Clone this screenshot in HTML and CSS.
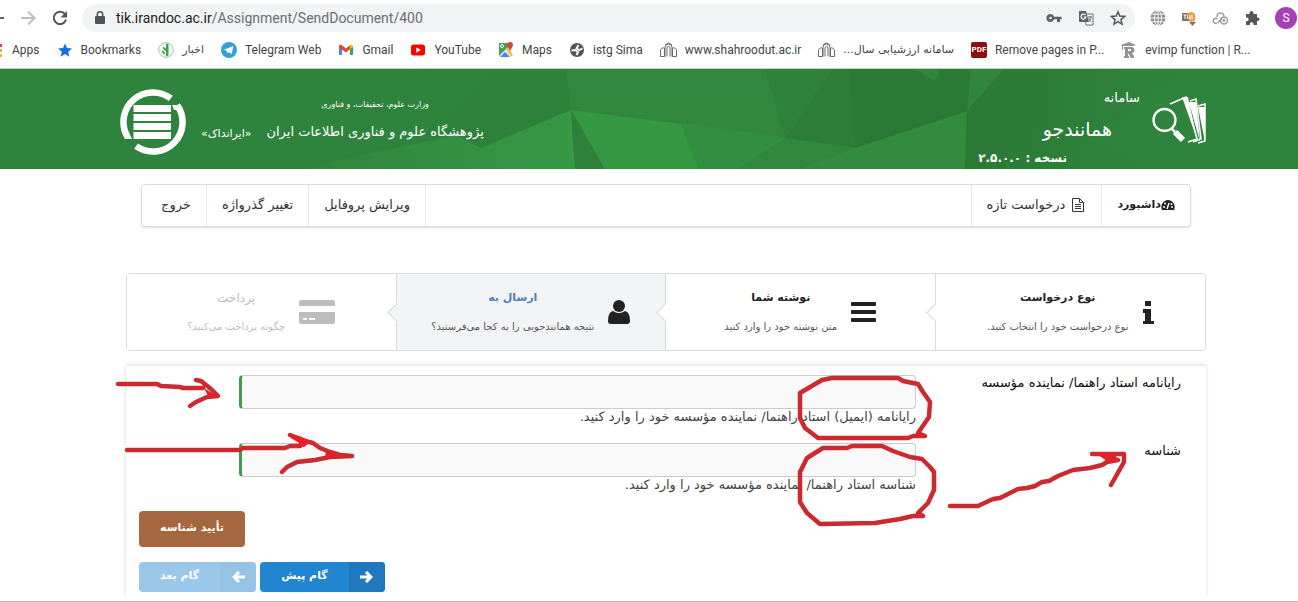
FILE: index.html
```html
<!DOCTYPE html>
<html lang="fa">
<head>
<meta charset="utf-8">
<title>سامانه همانندجو</title>
<link rel="stylesheet" href="styles.css">
</head>
<body>
<div class="page">
<header class="browser">
  <div class="toolbar">
    <button class="tool back" aria-label="Back"><svg width="10" height="16" viewBox="0 0 10 16"><path d="M0 8h4" stroke="#5f6368" stroke-width="2"/></svg></button>
    <button class="tool" aria-label="Forward"><svg width="16" height="16" viewBox="0 0 16 16" fill="none" stroke="#bcbec0" stroke-width="2"><path d="M1 8h13M8 1.500l6.500 6.500L8 14.500"/></svg></button>
    <button class="tool reload" aria-label="Reload"><svg width="16" height="16" viewBox="0 0 16 16"><path d="M13 4.200A6.200 6.200 0 1 0 14 9.500" fill="none" stroke="#505458" stroke-width="2"/><path d="M15 1v6.500H8.500z" fill="#505458"/></svg></button>
    <div class="address">
      <svg width="10" height="14" viewBox="0 0 10 14"><rect y="5" width="10" height="8" rx="1" fill="#505458"/><path d="M2.300 5V3.500a2.700 2.700 0 0 1 5.400 0V5" fill="none" stroke="#505458" stroke-width="1.500"/></svg>
      <p class="url"><span class="host">tik.irandoc.ac.ir</span>/Assignment/SendDocument/400</p>
      <div class="address-tools">
        <svg width="16" height="16" viewBox="0 0 16 16" fill="#5f6368"><path fill-rule="evenodd" d="M4.500 4a4 4 0 1 0 3.700 5.300H11V12h3V9.300h1.500V6.700H8.200A4 4 0 0 0 4.500 4zm0 2.700a1.300 1.300 0 1 1 0 2.600 1.300 1.300 0 0 1 0-2.600z"/></svg>
        <svg width="16" height="16" viewBox="0 0 16 16"><path d="M7 4h8v11H8z" fill="#fff" stroke="#6b6e72"/><path d="M1 1h7l3 11H2a1 1 0 0 1-1-1z" fill="#5f6368"/><path d="M7.500 5A2.500 2.500 0 1 0 8 7H5.800" fill="none" stroke="#fff" stroke-width="1.200"/><path d="M10 7h4M12 6v1M10.500 12q2.500-2 2.800-5M10.500 8q1 3 3 4" fill="none" stroke="#6b6e72"/></svg>
        <svg width="16" height="16" viewBox="0 0 16 16"><path d="M8 1.800l1.800 4.300 4.700.4-3.500 3.100 1 4.500L8 11.700l-4 2.400 1-4.500L1.500 6.500l4.700-.4z" fill="none" stroke="#54585c" stroke-width="1.500"/></svg>
      </div>
    </div>
    <div class="extensions">
      <svg width="16" height="16" viewBox="0 0 16 16" fill="none" stroke="#fff" stroke-width=".9"><circle cx="8" cy="8" r="7.500" fill="#8b8d90" stroke="none"/><ellipse cx="8" cy="8" rx="3.500" ry="7.500"/><path d="M8 0v16M0 8h16M1.500 4.200h13M1.500 11.800h13"/></svg>
      <svg width="16" height="16" viewBox="0 0 16 16"><rect x="1" y="3" width="9" height="8" rx="1" fill="#77736d"/><path d="M2.500 5h3M4 5v4M6.500 5v4" stroke="#fff"/><path d="M6 3l5-1 3 2v7l-4 1-3-3z" fill="#e8984e"/><path d="M8 5l4-.5v5H8z" fill="#ffd38c"/><path d="M8 12h7l-3.500 4z" fill="#777"/></svg>
      <svg width="17" height="16" viewBox="0 0 17 16" fill="none" stroke="#96989b" stroke-width="1.400"><path d="M5 7a3.500 3.500 0 0 1 7-1"/><path d="M5.500 9A2.500 2.500 0 1 0 5 13"/><path d="M6 13l4-5"/><circle cx="12" cy="10.500" r="3.500"/><circle cx="12" cy="10.500" r=".7" fill="#777"/></svg>
      <svg width="16" height="16" viewBox="0 0 16 16" fill="#54585c"><path d="M2 4h3.500V3a2 2 0 0 1 4 0v1H13v3.500h.7a1.800 1.800 0 0 1 0 3.600H13V15H9.500v-1a1.800 1.800 0 0 0-3.600 0v1H2v-3.800h.8a1.800 1.800 0 0 0 0-3.600H2z"/></svg>
      <span class="avatar">S</span>
    </div>
  </div>
  <nav class="bookmarks" aria-label="Bookmarks">
    <a href="#"><svg width="4" height="16" viewBox="0 0 4 16"><path d="M0 2h2v3H0z" fill="#d64545"/><path d="M0 7h2v3H0z" fill="#d9a54b"/><path d="M0 12h2v3H0z" fill="#e8bd28"/></svg>Apps</a>
    <a href="#"><svg width="16" height="16" viewBox="0 0 16 16"><path d="M8 1.500l2 4.600 5 .4-3.800 3.300 1.200 4.900L8 12.100l-4.400 2.600 1.200-4.900L1 6.500l5-.4z" fill="#1a6ddd"/></svg>Bookmarks</a>
    <a href="#"><svg width="16" height="16" viewBox="0 0 16 16"><circle cx="8" cy="8" r="7.300" fill="#fff" stroke="#7fbf86" stroke-width=".8"/><path d="M8 2l2.500-.5v12L8 14.500z" fill="#3da34b"/><path d="M3.500 8.500q3 0 4 4-3 0-4-4zM5 5q3 0 3.500 4Q5 9 5 5z" fill="#3da34b"/></svg><span lang="fa" dir="rtl">اخبار</span></a>
    <a href="#"><svg width="16" height="16" viewBox="0 0 16 16"><circle cx="8" cy="8" r="8" fill="#33a0d8"/><path d="M2.800 7.800l9.500-3.900-1.600 8.300-3-2.200-1.500 1.500-.4-2.700z" fill="#fff"/></svg>Telegram Web</a>
    <a href="#"><svg width="16" height="16" viewBox="0 0 16 16"><path d="M1 4h3v9H2a1 1 0 0 1-1-1z" fill="#4285f4"/><path d="M12 4h3v8a1 1 0 0 1-1 1h-2z" fill="#34a853"/><path d="M1 3.500Q2.500 2 4 3.300l4 3.200 4-3.200v4L8 10.500 1 5.500z" fill="#ea4335"/><path d="M12 3.300Q14 2 15 3.800V5l-3 2.300z" fill="#fbbc04"/></svg>Gmail</a>
    <a href="#"><svg width="16" height="16" viewBox="0 0 16 16"><rect x="1" y="2.500" width="14" height="11" rx="2.500" fill="#f00"/><path d="M6.300 5.300v5.400L11 8z" fill="#fff"/></svg>YouTube</a>
    <a href="#"><svg width="16" height="16" viewBox="0 0 16 16"><path d="M1 1h13v13H1z" fill="#40a35a"/><path d="M1 14L12 3l2 3v8z" fill="#e9e9e5"/><path d="M2 15l5-5 5 5z" fill="#4285f4"/><path d="M9 6l5 8" stroke="#f1bd2c" stroke-width="2"/><path d="M12 0a3 3 0 0 1 3 3c0 2-2 3-3 6-1-3-3-4-3-6a3 3 0 0 1 3-3z" fill="#d8463a"/><circle cx="4" cy="4" r="1.500" fill="none" stroke="#fff"/></svg>Maps</a>
    <a href="#"><svg width="16" height="16" viewBox="0 0 16 16"><circle cx="8" cy="8" r="7" fill="#505458"/><path d="M2.500 8.500l3.500-.5 3 2-1.500 3M13.500 6.500l-3 1.500-3-1.500L9.500 3" fill="none" stroke="#fff" stroke-width="1.900"/></svg>istg Sima</a>
    <a href="#"><svg width="17" height="16" viewBox="0 0 17 16" fill="none" stroke="#686868"><path d="M.5 14.500V9a3 3 0 0 1 4-3v8.500zM16.500 14.500V9a3 3 0 0 0-4-3v8.500zM5 14.500V5.500a3.500 3.500 0 0 1 7 0v9M7 14.500V6a1.500 1.500 0 0 1 3 0v8.500M5 3l3.500-2L12 3"/></svg>www.shahroodut.ac.ir</a>
    <a href="#"><svg width="17" height="16" viewBox="0 0 17 16" fill="none" stroke="#686868"><path d="M.5 14.500V9a3 3 0 0 1 4-3v8.500zM16.500 14.500V9a3 3 0 0 0-4-3v8.500zM5 14.500V5.500a3.500 3.500 0 0 1 7 0v9M7 14.500V6a1.500 1.500 0 0 1 3 0v8.500M5 3l3.500-2L12 3"/></svg><span lang="fa" dir="rtl">سامانه ارزشیابی سال...</span></a>
    <a href="#"><span class="pdf">PDF</span>Remove pages in P...</a>
    <a href="#"><svg width="16" height="16" viewBox="0 0 16 16" fill="#929292"><path d="M0 3l8-3 7 3-3 1H4L2 4v4H1V4z"/><path fill-rule="evenodd" d="M3 5h7a3 3 0 0 1 1 6l2 3v2h-3l-3-5v3h1v2H3v-2h1V7H3zm4 2v2h2a1 1 0 0 0 0-2z"/></svg>evimp function | R...</a>
  </nav>
</header>

<div class="site" dir="rtl">
  <header class="banner">
    <svg class="facets" viewBox="0 0 1298 100" preserveAspectRatio="none" aria-hidden="true">
      <defs>
        <linearGradient id="glow" x1="0" x2="1"><stop offset="0" stop-color="#2f843d"/><stop offset="1" stop-color="#369945"/></linearGradient>
        <linearGradient id="shade" x1="0" x2="1"><stop offset="0" stop-color="#2b7835"/><stop offset="1" stop-color="#2f843d"/></linearGradient>
      </defs>
      <path fill="#2f843d" d="M0 0h1298v100H0z"/>
      <path fill="url(#glow)" d="M300 100L571 41l4 59z"/>
      <path fill="#2e813a" d="M566 0l5 41-90 38-40-20 60-59z"/>
      <path fill="#31873e" d="M566 0h200l20 69-215-28z"/>
      <path fill="#2e813b" d="M571 41l4 59h30z"/>
      <path fill="#359843" d="M571 41l110 14 18 45h-94z"/>
      <path fill="#328e40" d="M681 54l105 15-48 31h-39z"/>
      <path fill="#2d7c38" d="M765 0h92v79l-71-10z"/>
      <path fill="#2f823b" d="M765 0h67l-46 69z"/>
      <path fill="#30873e" d="M786 69l69 10-57 21h-60z"/>
      <path fill="#328b3f" d="M855 79l112-37-2 58H798z"/>
      <path fill="#2b7936" d="M850 0h160l-43 42-112 37z"/>
      <path fill="#31863d" d="M915 0h25l-5 12zM971 0h33l-37 42z"/>
      <path fill="url(#shade)" d="M967 42l123 29 60 29H965z"/>
      <path fill="url(#shade)" d="M1004 0h180l-94 71-123-29z"/>
    </svg>
    <div class="product">
      <svg width="54" height="50" viewBox="0 0 54 50" fill="none" stroke="#fff"><circle cx="12.500" cy="25" r="11" stroke-width="2.300"/><path d="M20 34l3 3" stroke-width="2.500"/><path d="M23 37l8 8" stroke-width="6"/><path d="M18 9l16-7 11 42-9 3" stroke-width="1.600"/><path d="M30 2l6 0 9 42zM37 7h7l4 40zM46 12h7v35z" fill="#fff" stroke="none"/><path d="M38 6l6-2 5 40-8 3M46 11l7-2v37l-7 2" stroke-width="1.500"/></svg>
      <div class="product-text">
        <p class="kind">سامانه</p>
        <h1>همانندجو</h1>
        <p class="version">نسخه : ۲.۵.۰.۰</p>
      </div>
    </div>
    <div class="institute">
      <div class="institute-name">
        <p class="ministry">وزارت علوم، تحقیقات، و فناوری</p>
        <p class="research">پژوهشگاه علوم و فناوری اطلاعات ایران</p>
      </div>
      <p class="short">«ایرانداک»</p>
      <svg width="66" height="66" viewBox="0 0 66 66"><path d="M50.800 9.400A29.500 29.500 0 0 0 7.500 47.800M57.200 16.100A29.500 29.500 0 0 1 16.100 57.200" fill="none" stroke="#fff" stroke-width="6.500"/><path d="M13.500 16H51v7H13.500zM13.500 25H51v7H13.500zM13.500 34H51v7H13.500zM13.500 43H51v7H13.500zM52 16h9l1 5h-8zM4 46h6l2 4H5z" fill="#fff"/></svg>
    </div>
  </header>

  <nav class="menu" aria-label="منو">
    <a class="current" href="#"><svg width="14" height="12" viewBox="0 0 14 12"><path d="M7 1a7 7 0 0 0-6 10h12A7 7 0 0 0 7 1z" fill="#222"/><path d="M6 10l2-6" stroke="#fff" stroke-width="1.500"/><g fill="#fff"><circle cx="3" cy="8" r="1"/><circle cx="4" cy="4.500" r="1"/><circle cx="11" cy="8" r="1"/><circle cx="10.500" cy="5" r="1"/></g></svg>داشبورد</a>
    <a class="new" href="#"><svg width="12" height="14" viewBox="0 0 12 14" fill="none" stroke="#333"><path d="M.5.500h7l4 4v9H.5zM7.500.500v4h4M3 6.500h6M3 8.500h6M3 10.500h6"/></svg>درخواست تازه</a>
    <a class="profile" href="#">ویرایش پروفایل</a>
    <a href="#">تغییر گذرواژه</a>
    <a href="#">خروج</a>
  </nav>

  <ol class="steps">
    <li class="step"><svg width="11" height="23" viewBox="0 0 11 23" fill="#222"><path d="M2 0h6v5H2zM0 8h8v12h3v3H0v-3h2v-8H0z"/></svg><div><h2>نوع درخواست</h2><p>نوع درخواست خود را انتخاب کنید.</p></div></li>
    <li class="step"><svg width="25" height="22" viewBox="0 0 25 22" fill="#222"><rect y="1" width="25" height="4" rx="1"/><rect y="9" width="25" height="4" rx="1"/><rect y="17" width="25" height="4" rx="1"/></svg><div><h2>نوشته شما</h2><p>متن نوشته خود را وارد کنید</p></div></li>
    <li class="step active" aria-current="step"><svg width="22" height="24" viewBox="0 0 22 24" fill="#222"><path d="M5 11q6 4 12 0 5 1 5 10 0 3-3 3H3q-3 0-3-3 0-9 5-10z"/><circle cx="11" cy="6" r="6.800" fill="#f3f4f5"/><circle cx="11" cy="6" r="6"/></svg><div><h2>ارسال به</h2><p>نتیجه همانندجویی را به کجا می‌فرستید؟</p></div></li>
    <li class="step disabled"><svg width="36" height="24" viewBox="0 0 36 24" fill="#bdbdbd"><path d="M0 6V2q0-2 2-2h32q2 0 2 2v4zM0 12h36v10q0 2-2 2H2q-2 0-2-2z"/><path fill="#fff" d="M4 18h4v2H4zM10 18h6v2h-6z"/></svg><div><h2>پرداخت</h2><p>چگونه پرداخت می‌کنید؟</p></div></li>
  </ol>

  <form class="panel">
    <div class="row"><label for="email">رایانامه استاد راهنما/ نماینده مؤسسه</label><div class="field"><input id="email" type="email" aria-describedby="email-note"><p id="email-note">رایانامه (ایمیل) استاد راهنما/ نماینده مؤسسه خود را وارد کنید.</p></div></div>
    <div class="row"><label for="code">شناسه</label><div class="field"><input id="code" type="text" aria-describedby="code-note"><p id="code-note">شناسه استاد راهنما/ نماینده مؤسسه خود را وارد کنید.</p></div></div>
    <div class="actions"><button type="button" class="confirm">تأیید شناسه</button></div>
    <div class="actions steps-actions">
      <button type="button" class="move"><span class="arrow"><svg width="13" height="12" viewBox="0 0 13 12" fill="none" stroke="#fff" stroke-width="3"><path d="M0 6h11M6 1l5 5-5 5"/></svg></span><span class="caption">گام پیش</span></button>
      <button type="button" class="move next" disabled><span class="arrow"><svg width="13" height="12" viewBox="0 0 13 12" fill="none" stroke="#fff" stroke-width="3"><path d="M13 6H2M7 1L2 6l5 5"/></svg></span><span class="caption">گام بعد</span></button>
    </div>
  </form>
</div>
<svg class="marks" width="1298" height="602" viewBox="0 0 1298 602" aria-hidden="true">
  <g fill="none" stroke="#cb2a30" stroke-width="4.500" stroke-linecap="round" stroke-linejoin="round">
    <path d="M118 384L157 384 161 386 180 387 183 388 203 388M196 380L201 381 211 389 218 396 207 397 196 402 190 406"/>
    <path d="M127 450L240 450 243 448 285 448 290 446 300 446M290 435L301 440 313 443 320 448 330 452 340 455 352 456 330 457 315 460 297 462 287 467 282 472"/>
    <path d="M832 378L898 378 903 381 918 384 923 392 930 402 929 417 918 433 925 436 913 436 908 438 818 438 805 428 800 418 800 393 822 380z"/>
    <path d="M823 448L847 448 852 446 882 446 893 451 910 457 922 459 930 467 934 472 934 490 928 503 918 513 923 516 913 516 900 519 875 523 820 524 807 513 800 502 800 472 807 458z"/>
    <path d="M950 506L978 506 993 499 1000 498 1018 489 1027 488 1035 486 1042 482 1049 481 1058 476 1073 470 1090 468 1102 465 1107 462 1118 460M1092 454L1124 454 1124 462 1115 478 1111 485"/>
  </g>
  <path fill="#e6202b" d="M290 433l12 4 9 5-7 5-6-1 1-3-8-5zM326 451l13 3-4 2-10 1zM204 388l13 8-9 0zM1097 454l18 0 3 6-10 2zM919 432l4 3-6 2z"/>
</svg>
<footer class="edge"></footer>
</div>
</body>
</html>
```
FILE: styles.css
```css
* { box-sizing: border-box; }
body { margin: 0; background: #fff; font-family: "DejaVu Sans", sans-serif; color: #222; }
h1, h2, p, ol { margin: 0; padding: 0; }
a { color: inherit; text-decoration: none; }
svg { display: block; flex: none; }
button { font: inherit; border: 0; cursor: pointer; }
.page { position: relative; min-height: 100vh; display: flex; flex-direction: column; overflow: hidden; }

.browser { font-family: Roboto, "DejaVu Sans", sans-serif; color: #444; border-bottom: 1px solid #b7d8bd; }
.toolbar { display: flex; align-items: center; height: 36px; }
.tool { background: none; padding: 0; margin-right: 16px; }
.tool.back { margin-right: 10px; }
.tool.reload { margin-right: 14px; }
.address { flex: 1; display: flex; align-items: center; gap: 11px; height: 28px; padding: 0 9px 0 13px; border-radius: 14px; background: #f1f3f4; }
.url { flex: 1; font-size: 14px; line-height: 20px; color: #6b6f73; }
.host { color: #222; }
.address-tools { display: flex; gap: 16px; }
.extensions { display: flex; align-items: center; gap: 15px; margin-left: 15px; }
.avatar { width: 22px; height: 22px; margin-right: 1px; border-radius: 50%; background: #a640b5; color: #fff; font-size: 12px; line-height: 22px; text-align: center; }
.bookmarks { display: flex; align-items: center; gap: 17px; height: 32px; padding-bottom: 4px; font-size: 12px; line-height: 20px; white-space: nowrap; }
.bookmarks a { display: flex; align-items: center; gap: 8px; }
.bookmarks span[lang] { font-family: "DejaVu Sans", sans-serif; font-size: 11px; }
.bookmarks .pdf { width: 16px; height: 16px; border-radius: 2px; background: #8d0e0e; color: #fff; font-size: 8px; font-weight: 700; line-height: 16px; text-align: center; }

.site { flex: 1; display: flex; flex-direction: column; }
.banner { position: relative; display: flex; justify-content: space-between; height: 100px; padding: 0 92px 0 120px; color: #fff; }
.facets { position: absolute; inset: 0; width: 100%; height: 100%; }
.product, .institute { position: relative; display: flex; white-space: nowrap; }
.product { gap: 12px; }
.product > svg { margin-top: 26px; }
.product-text { padding-top: 18px; }
.kind { font-size: 13px; line-height: 22px; }
.product-text h1 { padding-right: 28px; font-size: 19px; font-weight: 400; line-height: 40px; }
.version { padding-right: 73px; font-size: 12px; font-weight: 700; line-height: 18px; }
.institute { align-items: center; gap: 15px; padding-top: 6px; }
.institute-name { text-align: center; }
.ministry { font-size: 8px; line-height: 20px; }
.research { font-size: 13px; line-height: 34px; }
.short { padding-top: 22px; font-size: 11px; }

.menu { display: flex; height: 43px; margin: 15px 107px 0 141px; border: 1px solid #dadbdc; border-radius: 4px; box-shadow: 0 1px 2px rgba(34, 36, 38, .15); font-size: 13px; line-height: 20px; }
.menu a { display: flex; align-items: center; padding: 0 15px 2px; border-left: 1px solid #e7e7e8; color: #333; white-space: nowrap; }
.menu a:last-child { border-left: 0; padding-left: 19px; }
.menu .current { font-size: 11px; font-weight: 700; color: #222; }
.menu .new { gap: 7px; padding-right: 17px; }
.menu .profile { margin-right: auto; border-right: 1px solid #e7e7e8; }

.steps { display: grid; grid-template-columns: repeat(4, 1fr); margin: 46px 92px 0 126px; border: 1px solid #d9dadb; border-radius: 4px; list-style: none; }
.step { position: relative; display: flex; align-items: center; justify-content: center; gap: 14px; height: 76px; text-align: center; white-space: nowrap; background: #fff; border-radius: 4px; }
.step + .step { border-right: 1px solid #d9dadb; border-radius: 0; }
.step:not(:last-child)::after { content: ""; position: absolute; z-index: 1; left: -7px; top: 32px; width: 12px; height: 12px; background: inherit; border: solid #d9dadb; border-width: 0 0 1px 1px; transform: rotate(45deg); }
.step h2 { font-size: 11px; font-weight: 700; line-height: 20px; }
.step p { margin-top: 10px; font-size: 10px; line-height: 18px; color: #555; }
.step.active { background: #f3f4f5; }
.step.active h2 { color: #4f7fbd; }
.step.disabled h2, .step.disabled p { color: #bdbdbd; }
.step.disabled h2 { font-size: 12px; font-weight: 400; }

.panel { flex: 1; margin: 14px 92px 0 126px; padding: 9px 25px 4px 13px; border-top: 1px solid #eee; box-shadow: 0 0 3px rgba(34, 36, 38, .2); clip-path: inset(-3px -3px 0 -3px); }
.row { display: grid; grid-template-columns: 265px 1fr; padding-left: 100px; height: 68px; }
.row label { font-size: 13px; line-height: 16px; color: #111; }
.field input { display: block; width: 100%; height: 34px; border: 1px solid #ccc; border-left: 3px solid #3f9d4f; border-radius: 4px; background: #f9f9f9; padding: 0 10px; font: inherit; }
.field p { font-size: 13px; line-height: 16px; color: #444; }
.actions { display: flex; justify-content: flex-end; gap: 4px; }
.actions button { border-radius: 4px; color: #fff; font-size: 11px; font-weight: 700; }
.confirm { height: 36px; padding: 0 21px 3px; background: #a5673f; }
.steps-actions { margin-top: 15px; }
.move { display: flex; height: 30px; padding: 0; background: #2185d0; overflow: hidden; }
.arrow { display: flex; align-items: center; justify-content: center; width: 36px; height: 30px; background: #1e78bb; }
.caption { padding: 0 21px; line-height: 28px; }
.actions .next { background: #9bc7ea; }
.next .arrow { background: #96c2e5; }
.marks { position: absolute; top: 0; left: 0; pointer-events: none; }
.edge { margin-top: 4px; height: 1px; border-top: 1px solid #bbb; }
```
